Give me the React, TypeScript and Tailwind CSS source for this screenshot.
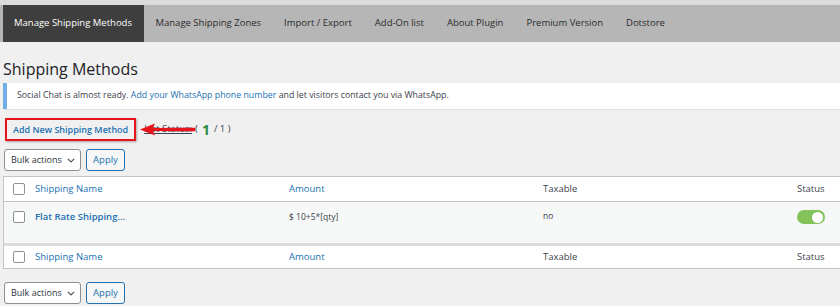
import React from 'react';

const tabs = ['Manage Shipping Zones', 'Import / Export', 'Add-On list', 'About Plugin', 'Premium Version', 'Dotstore'];

const Checkbox: React.FC = () => (
    <span className="block w-[12px] h-[12px] rounded-[2px] border border-[#8c8f94] bg-white" />
);

const BulkBar: React.FC = () => (
    <div className="flex items-center gap-[5px] ml-[4px] h-[22px]">
        <div className="flex items-center justify-between w-[77px] h-[22px] pl-[6px] pr-[5px] bg-white border border-[#8c8f94] rounded-[3px] text-[9px] whitespace-nowrap text-[#2c3338]">
            <span>Bulk actions</span>
            <svg width="8" height="5" viewBox="0 0 8 5" fill="none">
                <path d="M0.8 0.8 L4 4 L7.2 0.8" stroke="#50575e" strokeWidth="1.2" />
            </svg>
        </div>
        <div className="flex items-center justify-center w-[39px] h-[22px] bg-[#f6f7f7] border border-[#2271b1] rounded-[3px] text-[9.5px] text-[#2271b1]">
            Apply
        </div>
    </div>
);

const HeadRow: React.FC<{ className?: string }> = ({ className }) => (
    <div className={`flex items-center h-[25px] bg-white text-[9.5px] ${className ?? ''}`}>
        <div className="w-[31px] pl-[9px]">
            <Checkbox />
        </div>
        <div className="w-[254px] text-[#2271b1]">Shipping Name</div>
        <div className="w-[254px] text-[#2271b1]">Amount</div>
        <div className="flex-1 text-[#3c434a]">Taxable</div>
        <div className="w-[43px] text-[#3c434a]">Status</div>
    </div>
);

export default function App() {
    return (
        <div className="w-[840px] h-[306px] overflow-hidden bg-[#f0f0f1] font-['Open_Sans',sans-serif]">
            <div className="h-[5px] bg-[#dcdcdc]" />
            <div className="flex h-[37px] bg-[#b6b6b6] text-[9.5px] text-[#2c2c2c]">
                <div className="ml-[3px] flex items-center pl-[11px] pr-[12px] bg-[#3e3e3e] text-white">Manage Shipping Methods</div>
                {tabs.map((t) => (
                    <div key={t} className="flex items-center px-[11.5px]">
                        {t}
                    </div>
                ))}
            </div>
            <h1 className="ml-[3px] mt-[14px] h-[26px] text-[16px] leading-[26px] text-[#1d2327]">Shipping Methods</h1>
            <div className="ml-[3px] mt-[1px] h-[26px] flex items-center pl-[10px] bg-white border-l-4 border-[#72aee6] shadow-[0_1px_1px_rgba(0,0,0,0.06)] text-[8.8px] text-[#3c434a]">
                Social Chat is almost ready.&nbsp;<span className="text-[#2271b1]">Add your WhatsApp phone number</span>&nbsp;and let visitors contact you via WhatsApp.
            </div>
            <div className="relative mt-[9px] ml-[5px] flex items-center h-[23px]">
                <div className="flex items-center h-[23px] px-[6px] border-2 border-[#e8141c] shadow-[1px_1px_2px_rgba(0,0,0,0.3)] text-[9px] font-semibold text-[#2271b1]">
                    Add New Shipping Method
                </div>
                <div className="ml-[8px] flex items-center text-[9.5px] text-[#3c434a]">
                    <span className="underline">List Status:</span>
                    <span className="ml-[3px]">(</span>
                    <span className="mx-[4px] text-[14px] font-bold text-[#2e8b3c] leading-none">1</span>
                    <span>/ 1 )</span>
                </div>
                <svg className="absolute left-[133px] top-[4px]" width="60" height="15" viewBox="0 0 60 15">
                    <path d="M2 7.5 L17 1.5 L15 6 L57 5.8 L57 9.2 L15 9 L17 13.5 Z" fill="#e8141c" />
                </svg>
            </div>
            <div className="mt-[8px]">
                <BulkBar />
            </div>
            <div className="mt-[5px] ml-[3px] border-y border-l border-[#c3c4c7]">
                <HeadRow className="border-b border-[#c3c4c7]" />
                <div className="flex items-start h-[41px] pt-[8px] bg-[#f6f7f7] text-[9.5px]">
                    <div className="w-[31px] pl-[9px] pt-[1px]">
                        <Checkbox />
                    </div>
                    <div className="w-[254px] font-semibold text-[#2271b1]">Flat Rate Shipping...</div>
                    <div className="w-[254px] text-[8.5px] text-[#3c434a] pt-[1px]">$ 10+5*[qty]</div>
                    <div className="flex-1 text-[8.5px] text-[#3c434a]">no</div>
                    <div className="w-[43px]">
                        <div className="flex items-center justify-end w-[28px] h-[14px] px-[2px] rounded-full bg-[#83c35a]">
                            <span className="block w-[11px] h-[11px] rounded-full bg-white" />
                        </div>
                    </div>
                </div>
                <HeadRow className="border-t-[3px] border-[#dcdcde]" />
            </div>
            <div className="mt-[13px]">
                <BulkBar />
            </div>
        </div>
    );
}
